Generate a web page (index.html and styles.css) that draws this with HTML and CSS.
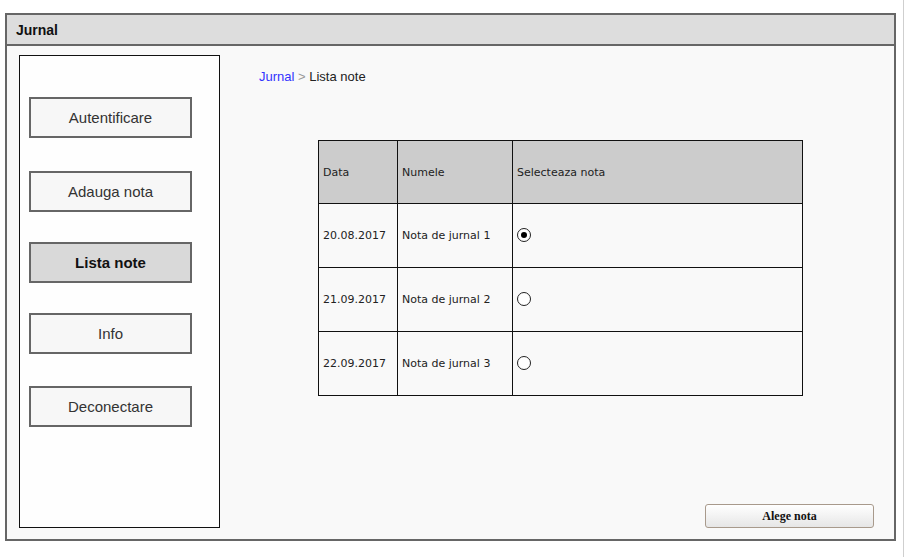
FILE: index.html
```html
<!DOCTYPE html>
<html>
<head>
<meta charset="utf-8">
<link rel="stylesheet" href="styles.css">
</head>
<body>
<div class="page">
  <div class="frame">
    <div class="titlebar">Jurnal</div>
    <div class="content">
      <nav class="sidebar">
        <div class="nav-btn">Autentificare</div>
        <div class="nav-btn">Adauga nota</div>
        <div class="nav-btn active">Lista note</div>
        <div class="nav-btn">Info</div>
        <div class="nav-btn">Deconectare</div>
      </nav>
      <main class="main">
        <div class="crumbs"><span class="crumb-link">Jurnal</span> <span class="crumb-sep">&gt;</span> Lista note</div>
        <table class="notes">
          <thead>
            <tr><th class="c1">Data</th><th class="c2">Numele</th><th class="c3">Selecteaza nota</th></tr>
          </thead>
          <tbody>
            <tr><td>20.08.2017</td><td>Nota de jurnal 1</td><td><span class="radio checked"></span></td></tr>
            <tr><td>21.09.2017</td><td>Nota de jurnal 2</td><td><span class="radio"></span></td></tr>
            <tr><td>22.09.2017</td><td>Nota de jurnal 3</td><td><span class="radio"></span></td></tr>
          </tbody>
        </table>
        <div class="actions"><button class="pick">Alege nota</button></div>
      </main>
    </div>
  </div>
</div>
</body>
</html>
```

FILE: styles.css
```css
html, body {
  margin: 0;
  padding: 0;
  background: #ffffff;
}
.page {
  width: 904px;
  height: 557px;
  box-sizing: border-box;
  border-right: 1px solid #cfcfcf;
  padding: 13px 0 0 5px;
}
.frame {
  width: 891px;
  height: 528px;
  box-sizing: border-box;
  border: 2px solid #666666;
  display: flex;
  flex-direction: column;
  background: #f9f9f9;
}
.titlebar {
  height: 29px;
  border-bottom: 2px solid #666666;
  background: #dddddd;
  font-family: "Liberation Sans", Arial, sans-serif;
  font-weight: bold;
  font-size: 14px;
  color: #111;
  line-height: 30px;
  padding-left: 9px;
}
.content {
  flex: 1;
  display: flex;
  padding: 9px 0 11px 12px;
  min-height: 0;
}
.sidebar {
  width: 201px;
  box-sizing: border-box;
  border: 1px solid #111;
  background: #fefefe;
  display: flex;
  flex-direction: column;
  gap: 30px;
  padding: 41px 0 0 9px;
}
.nav-btn {
  width: 163px;
  height: 41px;
  box-sizing: border-box;
  border: 2px solid #666666;
  background: #f7f7f7;
  font-family: "Liberation Sans", Arial, sans-serif;
  font-size: 15px;
  color: #333;
  display: flex;
  align-items: center;
  justify-content: center;
}
.nav-btn:nth-child(2) { margin-top: 3px; }
.nav-btn:nth-child(5) { margin-top: 2px; }
.nav-btn.active {
  background: #d9d9d9;
  font-weight: bold;
  color: #111;
}
.main {
  flex: 1;
  display: flex;
  flex-direction: column;
  padding: 14px 20px 0 39px;
}
.crumbs {
  font-family: "Liberation Sans", Arial, sans-serif;
  font-size: 13px;
  color: #222;
  line-height: 16px;
}
.crumb-link { color: #3333ff; }
.crumb-sep { color: #999; }
.notes {
  margin: 55px 0 0 59px;
  border-collapse: collapse;
  font-family: "Comic Sans MS", "DejaVu Sans", sans-serif;
  font-size: 11px;
  color: #222;
  width: 485px;
}
.notes th, .notes td {
  border: 1px solid #111;
  height: 64px;
  padding: 0 0 0 4px;
  text-align: left;
  font-weight: normal;
  vertical-align: middle;
  box-sizing: border-box;
}
.notes th {
  height: 63px;
  background: #cccccc;
}
.notes td {
  background: #f9f9f9;
}
.c1 { width: 79px; }
.c2 { width: 115px; }
.radio {
  display: block;
  width: 14px;
  height: 14px;
  box-sizing: border-box;
  border: 1px solid #222;
  border-radius: 50%;
  background: #fff;
  position: relative;
  margin-top: -2px;
}
.radio.checked::after {
  content: "";
  position: absolute;
  left: 3px;
  top: 3px;
  width: 6px;
  height: 6px;
  border-radius: 50%;
  background: #000;
}
.actions {
  margin-top: auto;
  display: flex;
  justify-content: flex-end;
}
.pick {
  width: 169px;
  height: 24px;
  border: 1px solid #a89a8c;
  border-radius: 3px;
  background: linear-gradient(#ffffff, #e6e6e6);
  font-family: "Liberation Serif", "Times New Roman", serif;
  font-weight: bold;
  font-size: 12px;
  color: #111;
  padding: 0;
}
```
